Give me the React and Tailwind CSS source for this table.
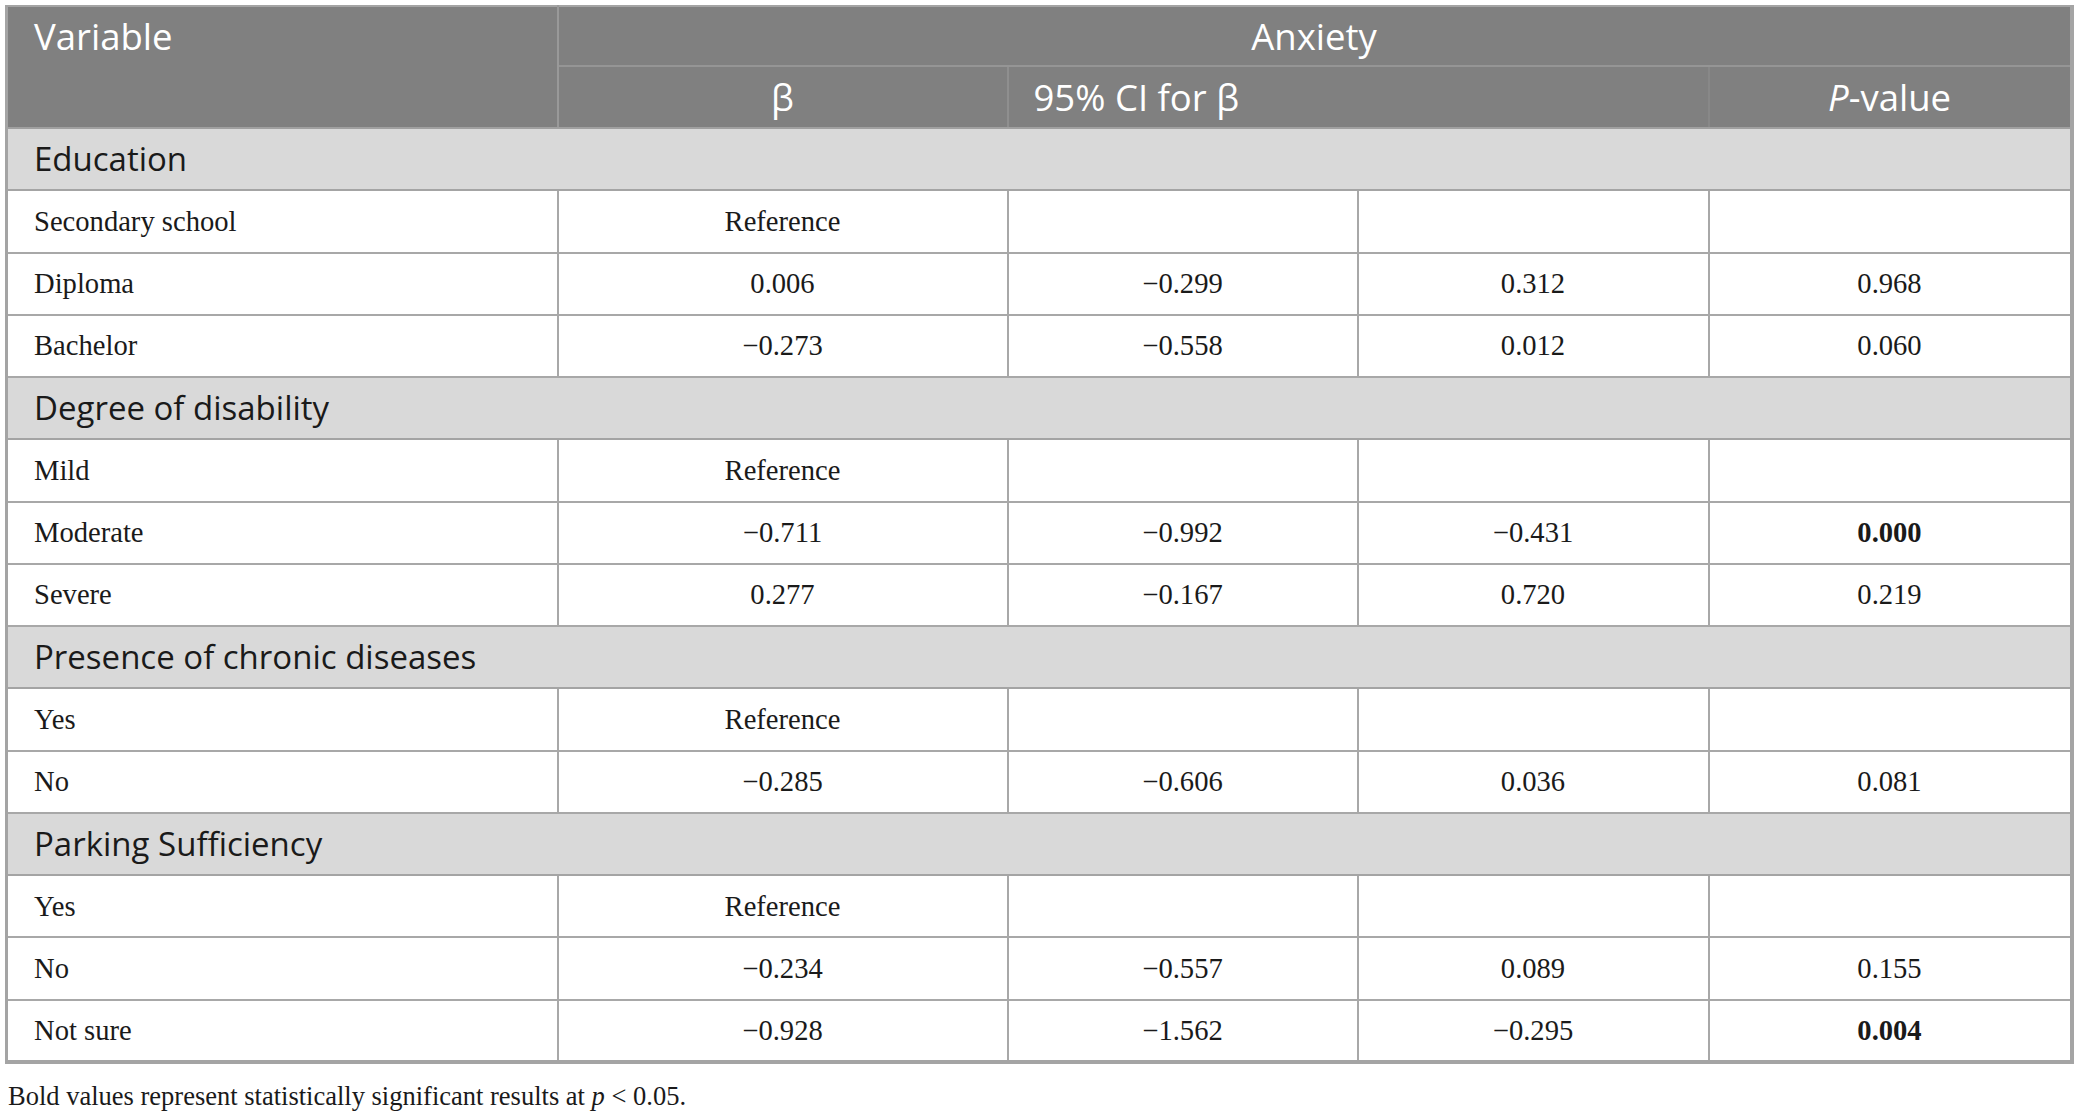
import React from "react";

const sections = [
  {
    title: "Education",
    rows: [
      ["Secondary school", "Reference", "", "", ""],
      ["Diploma", "0.006", "−0.299", "0.312", "0.968"],
      ["Bachelor", "−0.273", "−0.558", "0.012", "0.060"],
    ],
  },
  {
    title: "Degree of disability",
    rows: [
      ["Mild", "Reference", "", "", ""],
      ["Moderate", "−0.711", "−0.992", "−0.431", "0.000", true],
      ["Severe", "0.277", "−0.167", "0.720", "0.219"],
    ],
  },
  {
    title: "Presence of chronic diseases",
    rows: [
      ["Yes", "Reference", "", "", ""],
      ["No", "−0.285", "−0.606", "0.036", "0.081"],
    ],
  },
  {
    title: "Parking Sufficiency",
    rows: [
      ["Yes", "Reference", "", "", ""],
      ["No", "−0.234", "−0.557", "0.089", "0.155"],
      ["Not sure", "−0.928", "−1.562", "−0.295", "0.004", true],
    ],
  },
];

const sans = { fontFamily: '"Open Sans", "Noto Sans", sans-serif' };
const serif = { fontFamily: '"Liberation Serif", "Times New Roman", serif' };

export default function App() {
  return (
    <div className="w-[2076px] h-[1118px] bg-white pt-[5px] pl-[5px] overflow-hidden">
      <table className="table-fixed border-collapse w-[2065px] border-l-[3px] border-r-[4px] border-t-[2px] border-b-[4px] border-[#a4a4a4]">
        <colgroup>
          <col className="w-[551px]" />
          <col className="w-[450px]" />
          <col className="w-[350px]" />
          <col className="w-[351px]" />
          <col className="w-[363px]" />
        </colgroup>
        <thead className="bg-[#808080] text-white text-[36.5px]" style={sans}>
          <tr className="h-[60px]">
            <th
              rowSpan={2}
              className="align-top text-left font-normal pl-[26px] leading-[58px] border-r-2 border-[#999999] border-b-2 border-b-[#a0a0a0]"
            >
              Variable
            </th>
            <th
              colSpan={4}
              className="font-normal text-center leading-[56px] border-b-2 border-[#959595]"
            >
              Anxiety
            </th>
          </tr>
          <tr className="h-[62px]">
            <th className="font-normal text-center leading-[58px] border-r-2 border-[#8f8f8f] border-b-2 border-b-[#a0a0a0]">
              β
            </th>
            <th
              colSpan={2}
              className="font-normal text-left pl-[25px] leading-[58px] border-r-2 border-[#888888] border-b-2 border-b-[#a0a0a0]"
            >
              95% CI for β
            </th>
            <th className="font-normal text-center leading-[58px] border-b-2 border-[#a0a0a0]">
              <span className="italic">P</span>-value
            </th>
          </tr>
        </thead>
        <tbody className="text-[#1a1a1a]">
          {sections.map((s) => (
            <React.Fragment key={s.title}>
              <tr className="h-[62.25px] bg-[#d9d9d9]">
                <td
                  colSpan={5}
                  className="pl-[26px] text-[33px] align-middle border-b-2 border-[#a4a4a4]"
                  style={sans}
                >
                  {s.title}
                </td>
              </tr>
              {s.rows.map((r, i) => (
                <tr key={i} className="h-[62.25px] text-[28.6px]" style={serif}>
                  <td className="pl-[26px] pt-[2px] align-middle border-b-2 border-r-2 border-[#a8a8a8]">
                    {r[0]}
                  </td>
                  <td className="text-center pt-[2px] align-middle border-b-2 border-r-2 border-[#a8a8a8]">
                    {r[1]}
                  </td>
                  <td className="text-center pt-[2px] align-middle border-b-2 border-r-2 border-[#a8a8a8]">
                    {r[2]}
                  </td>
                  <td className="text-center pt-[2px] align-middle border-b-2 border-r-2 border-[#a8a8a8]">
                    {r[3]}
                  </td>
                  <td
                    className={
                      "text-center pt-[2px] align-middle border-b-2 border-[#a8a8a8] " +
                      (r[5] ? "font-bold" : "")
                    }
                  >
                    {r[4]}
                  </td>
                </tr>
              ))}
            </React.Fragment>
          ))}
        </tbody>
      </table>
      <div
        className="mt-[17px] pl-[3px] text-[26.5px] leading-[30px] text-[#1a1a1a]"
        style={serif}
      >
        Bold values represent statistically significant results at <span className="italic">p</span> &lt; 0.05.
      </div>
    </div>
  );
}
